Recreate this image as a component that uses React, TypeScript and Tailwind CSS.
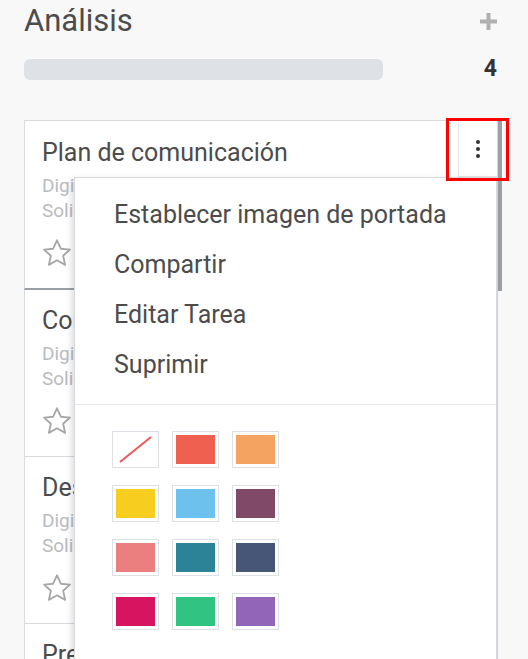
import React from 'react';

const colors = [
  null,
  '#f06050',
  '#f4a460',
  '#f7cd1f',
  '#6cc1ed',
  '#814968',
  '#eb7e7f',
  '#2c8397',
  '#475577',
  '#d6145f',
  '#30c381',
  '#9365b8',
];

const cards = ['Plan de comunicación', 'Compartir contenido', 'Desarrollo web', 'Presentación'];

function Star() {
  return (
    <svg width="32" height="32" viewBox="0 0 24 24" fill="none" stroke="#a8a8a8" strokeWidth="1.4" strokeLinejoin="round">
      <path d="M12 2.5l2.9 6.3 6.8.7-5.1 4.6 1.5 6.8L12 17.4l-6.1 3.5 1.5-6.8-5.1-4.6 6.8-.7z" />
    </svg>
  );
}

function Card({ title, first }: { title: string; first?: boolean }) {
  return (
    <div
      className={`shrink-0 bg-white border-l border-[#d8dadd] pl-[17px] ${
        first
          ? 'h-[170px] pt-[17px] border-t border-b-2 border-b-[#9aa0a6]'
          : 'h-[167px] pt-[16px] border-b border-b-[#d8dadd]'
      }`}
    >
      <div className="text-[25px] leading-[30px] text-[#4c4c4c] whitespace-nowrap">{title}</div>
      <div className="mt-[5px] text-[19px] leading-[25px] text-[#b9bcc0]">
        <div>Digital</div>
        <div>Solicitud</div>
      </div>
      <div className="mt-[14px] ml-[-1px]">
        <Star />
      </div>
    </div>
  );
}

export default function App() {
  return (
    <div
      className="relative w-[528px] h-[659px] overflow-hidden bg-[#f8f8f8]"
      style={{ fontFamily: 'Roboto, "Noto Sans", sans-serif' }}
    >
      <div className="pl-[24px] pr-[28px] pt-[2px]">
        <div className="flex items-center justify-between h-[38px]">
          <span className="text-[31px] text-[#4c4c4c]">Análisis</span>
          <svg width="17" height="17" viewBox="0 0 17 17" className="mr-[3px] mt-[1px]">
            <rect x="6.5" y="0" width="4" height="17" fill="#b0b0b0" />
            <rect x="0" y="6.5" width="17" height="4" fill="#b0b0b0" />
          </svg>
        </div>
        <div className="flex items-center justify-between mt-[19px] h-[21px]">
          <div className="w-[359px] h-[21px] rounded-[6px] bg-[#dee2e6]" />
          <span className="text-[23px] font-bold text-[#333] mr-[3px]">4</span>
        </div>
      </div>

      <div className="flex ml-[24px] mt-[40px] h-[600px]">
        <div className="flex flex-col w-[473px]">
          {cards.map((c, i) => (
            <Card key={c} title={c} first={i === 0} />
          ))}
        </div>
        <div className="w-[5px] flex flex-col border-l border-[#d5d8dc]">
          <div className="h-[171px] w-[4px] bg-[#9aa0a6]" />
        </div>
      </div>

      {/* kebab button */}
      <div className="absolute left-[458px] top-[122px] w-[39px] h-[55px] border-l border-b border-[#e2e5e8] bg-white flex flex-col items-center justify-center gap-[3px]">
        <span className="w-[4px] h-[4px] rounded-full bg-[#333]" />
        <span className="w-[4px] h-[4px] rounded-full bg-[#333]" />
        <span className="w-[4px] h-[4px] rounded-full bg-[#333]" />
      </div>

      {/* dropdown */}
      <div className="absolute left-[74px] top-[177px] w-[423px] h-[520px] bg-white border border-[#d5d8dc] shadow-[-3px_2px_6px_rgba(0,0,0,0.12)]">
        <div className="pt-[12px] pb-[14px] text-[25px] text-[#4c4c4c]">
          {['Establecer imagen de portada', 'Compartir', 'Editar Tarea', 'Suprimir'].map((t) => (
            <div key={t} className="h-[50px] flex items-center pl-[39px] whitespace-nowrap">
              {t}
            </div>
          ))}
        </div>
        <div className="border-t border-[#e6e8eb]" />
        <div className="grid grid-cols-[47px_47px_47px] gap-x-[13px] gap-y-[17px] pl-[37px] pt-[26px]">
          {colors.map((c, i) => (
            <div key={i} className="w-[47px] h-[37px] border border-[#dde0e4] p-[3px]">
              {c ? (
                <div className="w-full h-full" style={{ backgroundColor: c }} />
              ) : (
                <svg viewBox="0 0 39 29" className="w-full h-full">
                  <line x1="4" y1="27" x2="35" y2="2" stroke="#f0555a" strokeWidth="2" />
                </svg>
              )}
            </div>
          ))}
        </div>
      </div>

      {/* highlight */}
      <div className="absolute left-[446px] top-[118px] w-[63px] h-[63px] border-[3px] border-[#ff0000]" />
    </div>
  );
}
